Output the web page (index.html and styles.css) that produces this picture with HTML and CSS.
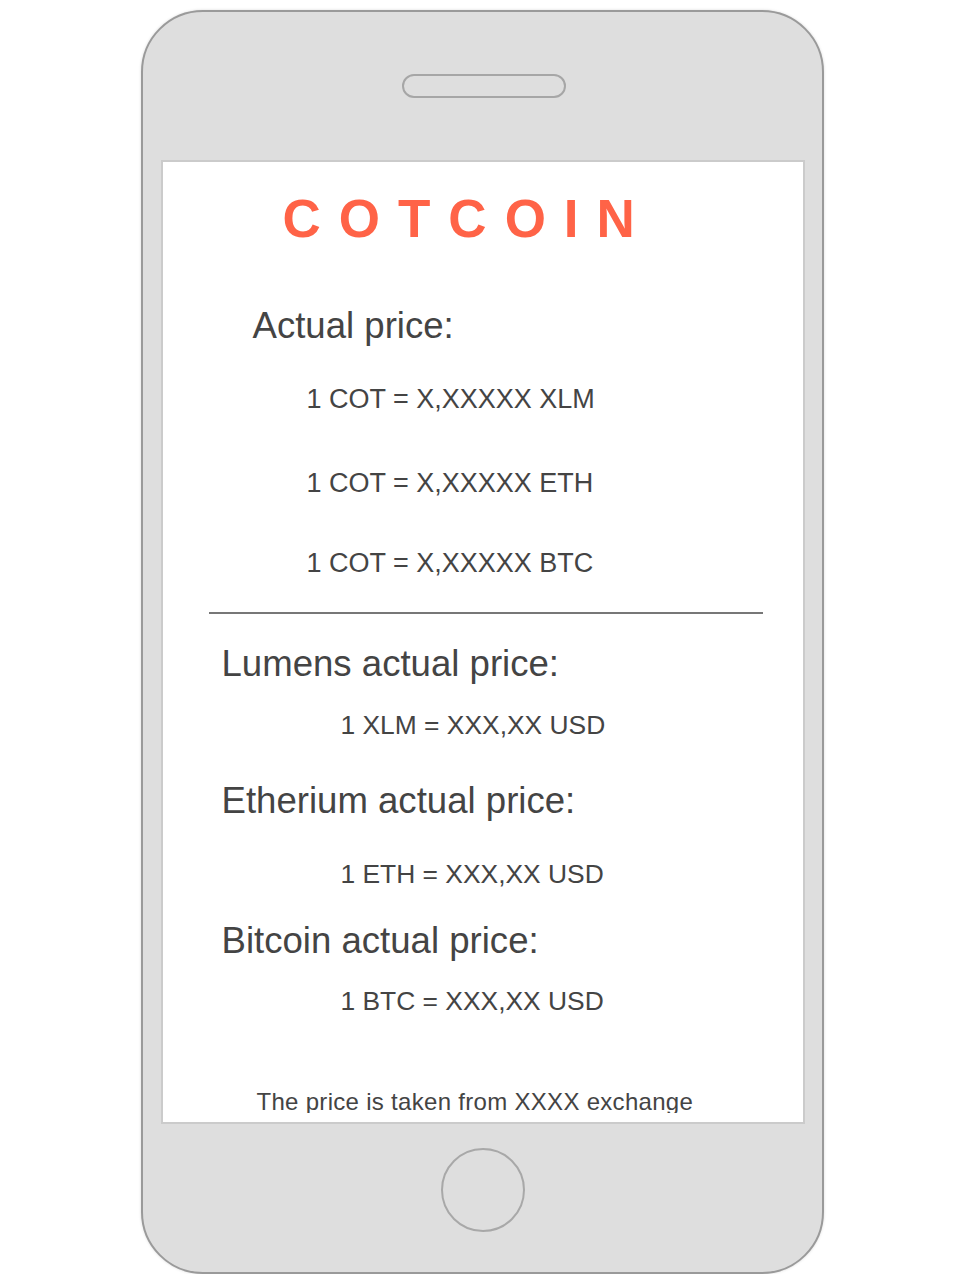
FILE: index.html
```html
<!DOCTYPE html>
<html>
<head>
<meta charset="utf-8">
<title>COTCOIN</title>
<link rel="stylesheet" href="styles.css">
</head>
<body>
<div class="phone">
  <div class="speaker"></div>
  <div class="screen">
    <div class="title">COTCOIN</div>
    <div class="h h-actual">Actual price:</div>
    <div class="v v-cot v1">1 COT = X,XXXXX XLM</div>
    <div class="v v-cot v2">1 COT = X,XXXXX ETH</div>
    <div class="v v-cot v3">1 COT = X,XXXXX BTC</div>
    <div class="divider"></div>
    <div class="h h-coin h1">Lumens actual price:</div>
    <div class="v v-usd u1">1 XLM = XXX,XX USD</div>
    <div class="h h-coin h2">Etherium actual price:</div>
    <div class="v v-usd u2">1 ETH = XXX,XX USD</div>
    <div class="h h-coin h3">Bitcoin actual price:</div>
    <div class="v v-usd u3">1 BTC = XXX,XX USD</div>
    <div class="footer">The price is taken from XXXX exchange</div>
  </div>
  <div class="home"></div>
</div>
</body>
</html>
```
FILE: styles.css
```css
html, body {
  margin: 0;
  padding: 0;
  background: #ffffff;
}
body {
  font-family: "Liberation Sans", Arial, sans-serif;
  color: #444444;
}
.phone {
  box-sizing: border-box;
  margin: 10px 0 0 141px;
  width: 683px;
  height: 1264px;
  border: 2px solid #9a9a9a;
  border-radius: 62px;
  background: #dedede;
  box-shadow: 0 0 3px rgba(0, 0, 0, 0.15);
  display: flex;
  flex-direction: column;
  align-items: center;
}
.speaker {
  box-sizing: border-box;
  margin-top: 62px;
  margin-left: 2px;
  width: 164px;
  height: 24px;
  border: 2px solid #a6a6a6;
  border-radius: 12px;
  background: #dedede;
}
.screen {
  box-sizing: border-box;
  margin-top: 62px;
  width: 644px;
  height: 964px;
  border: 2px solid #cbcbcb;
  background: #ffffff;
  overflow: hidden;
  display: flex;
  flex-direction: column;
  align-items: flex-start;
}
.home {
  box-sizing: border-box;
  margin-top: 24px;
  width: 84px;
  height: 84px;
  border: 2px solid #a8a8a8;
  border-radius: 50%;
}
.title {
  margin-top: 27px;
  padding-left: 120px;
  font-size: 53px;
  line-height: 60px;
  font-weight: bold;
  letter-spacing: 18px;
  color: #ff6347;
  white-space: nowrap;
}
.h {
  font-size: 36.6px;
  line-height: 40px;
  white-space: nowrap;
}
.v {
  font-size: 27px;
  line-height: 30px;
  white-space: nowrap;
}
.h-actual {
  margin-top: 57px;
  padding-left: 90px;
}
.v-cot {
  padding-left: 144px;
}
.v1 { margin-top: 38px; }
.v2 { margin-top: 54px; }
.v3 { margin-top: 50px; }
.divider {
  margin-top: 34px;
  margin-left: 46px;
  width: 554px;
  height: 2px;
  background: #777777;
}
.h-coin {
  padding-left: 59px;
}
.h1 { margin-top: 30px; }
.h2 { margin-top: 41px; }
.h3 { margin-top: 32px; }
.v-usd {
  padding-left: 178px;
  font-size: 26.4px;
}
.u1 { margin-top: 26px; }
.u2 { margin-top: 38px; }
.u3 { margin-top: 25px; }
.footer {
  margin-top: 73px;
  padding-left: 94px;
  font-size: 24px;
  line-height: 26px;
  letter-spacing: 0.3px;
  height: 24px;
  overflow: hidden;
  white-space: nowrap;
}
```
